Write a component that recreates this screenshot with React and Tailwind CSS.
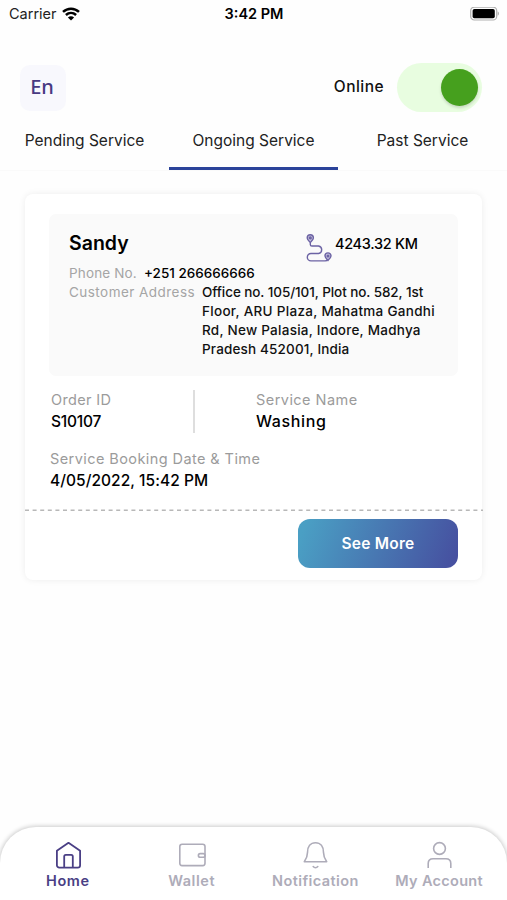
import React, { useState } from 'react';

const TABS = ['Pending Service', 'Ongoing Service', 'Past Service'];

const StatusBar = () => (
    <div className="flex h-7 items-center pl-[9px] pr-[8px] text-black">
        <div className="flex flex-1 items-center gap-[5px]">
            <span className="text-[14.5px] leading-[18px] text-[#222]">Carrier</span>
            <svg width="18" height="14" viewBox="0 0 18 14" fill="none" stroke="#000" strokeWidth="2.5">
                <path d="M1 4.9C5.6 .6 12.4 .6 17 4.9" />
                <path d="M3.9 8C6.9 5.2 11.1 5.2 14.1 8" />
                <path d="M9 13.6 5.9 10.5C7.7 8.9 10.3 8.9 12.1 10.5Z" fill="#000" stroke="none" />
            </svg>
        </div>
        <span className="text-[14.5px] font-semibold leading-[18px]">3:42 PM</span>
        <div className="flex flex-1 justify-end">
            <svg width="29" height="14" viewBox="0 0 29 14" fill="none">
                <rect x="0.7" y="0.2" width="26" height="12.8" rx="3.6" stroke="#b0b0b0" strokeWidth="1.2" />
                <rect x="2.6" y="2" width="22.2" height="9.2" rx="1.8" fill="#000" />
                <path d="M27.7 4.4c1.6.6 1.6 3.8 0 4.4z" fill="#a8a8a8" />
            </svg>
        </div>
    </div>
);

const Header = ({ online, onToggle }) => (
    <div className="mt-[34px] flex h-[50px] items-center pl-5 pr-[25px]">
        <button className="mt-[2px] flex h-[46px] w-[46px] items-center justify-center rounded-[10px] bg-[#f8f8fd] pb-[2px] pr-[2px] font-['Noto_Sans'] text-[20px] font-medium text-[#483a82]">
            En
        </button>
        <span className="ml-auto text-[15.5px] font-medium leading-6 tracking-[0.45px] text-[#111]">Online</span>
        <button
            onClick={onToggle}
            className={`ml-[13px] flex h-[49px] w-[85px] items-center rounded-full px-[4px] ${online ? 'justify-end bg-[#e8fde0]' : 'justify-start bg-gray-200'}`}
        >
            <span className="h-[37px] w-[37px] rounded-full bg-[#46a01e] shadow-[0_2px_3px_rgba(0,0,0,0.15)]" />
        </button>
    </div>
);

const RouteIcon = () => (
    <svg width="26" height="28" viewBox="0 0 26 28" fill="none" stroke="#6c63a4" strokeWidth="1.4" strokeLinecap="round">
        <path d="M4.3 9.2v1.200c0 1 .7 1.600 1.700 1.600h6.500a3.800 3.800 0 0 1 0 7.500H5a3.700 3.700 0 0 0 0 7.400h14.200c1.400 0 2-.4 2.500-1.500" />
        <path d="M4.300 8.600C2.600 6.600 1.200 5.300 1.200 3.900a3.100 3.100 0 0 1 6.200 0c0 1.400-1.400 2.700-3.100 4.700Z" fill="#c5c0dc" />
        <path d="M22 26.400c-1.700-1.800-3-3.100-3-4.500a3 3 0 0 1 6 0c0 1.400-1.300 2.700-3 4.500Z" fill="#c5c0dc" />
        <circle cx="4.300" cy="3.900" r="0.900" />
        <circle cx="22" cy="21.900" r="0.800" />
    </svg>
);

const Field = ({ label, value, labelClass, valueClass }) => (
    <div>
        <p className={`text-[14.5px] leading-[20px] text-[#9b9b9b] ${labelClass}`}>{label}</p>
        <p className={`font-medium leading-[23px] text-black ${valueClass}`}>{value}</p>
    </div>
);

const ServiceCard = () => (
    <div className="mx-[25px] mt-[23px] h-[386px] rounded-[8px] bg-white shadow-[0_0_7px_rgba(0,0,0,0.07)]">
        <div className="px-6 pt-5">
            <div className="h-[162px] rounded-[7px] bg-[#fafafa] pl-5 pt-[15px]">
                <div className="flex h-[35px]">
                    <h2 className="w-[237px] text-[19.5px] font-semibold leading-[28px] text-black">Sandy</h2>
                    <div className="mt-[5px]">
                        <RouteIcon />
                    </div>
                    <span className="ml-[3px] mt-[4px] text-[14.5px] font-medium leading-[21px] tracking-[-0.3px] text-black">4243.32 KM</span>
                </div>
                <div className="flex text-[13.5px] leading-[19px]">
                    <span className="w-[75px] whitespace-nowrap tracking-[0.15px] text-[#a5a5a5]">Phone No.</span>
                    <span className="whitespace-nowrap font-medium text-black">+251 266666666</span>
                </div>
                <div className="flex text-[13.5px] leading-[19px]">
                    <span className="w-[133px] whitespace-nowrap tracking-[0.46px] text-[#a5a5a5]">Customer Address</span>
                    <p className="whitespace-nowrap font-medium text-[#111]">
                        <span className="tracking-[-0.08px]">Office no. 105/101, Plot no. 582, 1st</span><br />
                        <span className="tracking-[0.3px]">Floor, ARU Plaza, Mahatma Gandhi</span><br />
                        <span className="tracking-[0.26px]">Rd, New Palasia, Indore, Madhya</span><br />
                        <span className="tracking-[0.16px]">Pradesh 452001, India</span>
                    </p>
                </div>
            </div>
        </div>
        <div className="mt-[14px] flex h-[43px] pl-[26px]">
            <div className="w-[142px]">
                <Field label="Order ID" value="S10107" labelClass="tracking-[0.35px]" valueClass="text-[15.5px] tracking-[-0.2px]" />
            </div>
            <div className="mr-[61px] w-[2px] bg-[#dedede]" />
            <Field label="Service Name" value="Washing" labelClass="tracking-[0.45px]" valueClass="text-[16px] tracking-[0.65px]" />
        </div>
        <div className="mt-[16px] pl-[25px]">
            <Field label="Service Booking Date & Time" value="4/05/2022, 15:42 PM" labelClass="tracking-[0.42px]" valueClass="text-[15.5px] tracking-[0.05px]" />
        </div>
        <svg className="mt-[17px] block" width="458" height="2" viewBox="0 0 458 2">
            <line x1="0" y1="1.2" x2="458" y2="1.2" stroke="#b8b8b8" strokeWidth="1.5" strokeDasharray="4 3.6" />
        </svg>
        <div className="flex justify-end pr-6 pt-[8px]">
            <button className="h-[49px] w-[160px] rounded-[12px] bg-[linear-gradient(110deg,#4a9fc4_5%,#4650a0_97%)] text-[15.5px] font-semibold tracking-[0.25px] text-white">
                See More
            </button>
        </div>
    </div>
);

const HomeIcon = () => (
    <svg width="28" height="28" viewBox="0 0 28 28" fill="none" stroke="currentColor" strokeWidth="1.8" strokeLinejoin="round">
        <path d="M2.900 9.800 14.500 1.800 26.100 9.800v14.400a2.400 2.400 0 0 1-2.400 2.400H5.300a2.400 2.400 0 0 1-2.400-2.400Z" />
        <path d="M10.200 26.500V15.400c0-1 .6-1.600 1.600-1.600h5.400c1 0 1.600.6 1.600 1.600v11.100" />
    </svg>
);

const WalletIcon = () => (
    <svg width="28" height="28" viewBox="0 0 28 28" fill="none" stroke="currentColor" strokeWidth="1.6">
        <rect x="1.800" y="3.200" width="25.200" height="21.400" rx="2.300" />
        <rect x="20.400" y="12.600" width="6.600" height="3.600" rx="1.800" />
    </svg>
);

const BellIcon = () => (
    <svg width="28" height="28" viewBox="0 0 28 28" fill="none" stroke="currentColor" strokeWidth="1.6" strokeLinejoin="round" strokeLinecap="round">
        <path d="M3.300 20.700c2-2.800 3.200-5.500 3.200-9.200C6.500 5.500 9.500 1.700 14.500 1.700s8 3.800 8 9.800c0 3.700 1.200 6.400 3.200 9.200Z" />
        <path d="M12.200 25.600c1.300 1.500 3.300 1.500 4.600 0" />
    </svg>
);

const AccountIcon = () => (
    <svg width="28" height="28" viewBox="0 0 28 28" fill="none" stroke="currentColor" strokeWidth="1.6">
        <circle cx="14.500" cy="7.500" r="5.900" />
        <path d="M3.200 27v-4.500c0-3 1.900-4.700 4.900-4.700h12.800c3 0 4.900 1.700 4.900 4.700V27" />
    </svg>
);

const NAV_ITEMS = [
    { label: 'Home', icon: HomeIcon, tracking: 'tracking-[0.6px]' },
    { label: 'Wallet', icon: WalletIcon, tracking: 'tracking-[0.55px]' },
    { label: 'Notification', icon: BellIcon, tracking: 'tracking-[0.4px]' },
    { label: 'My Account', icon: AccountIcon, tracking: 'tracking-[0.3px]' },
];

const BottomNav = () => (
    <nav className="mt-auto flex h-[73px] rounded-t-[36px] bg-white px-[6px] pt-[14px] shadow-[0_0_4px_1px_rgba(0,0,0,0.2)]">
        {NAV_ITEMS.map(({ label, icon: Icon, tracking }, i) => (
            <button key={label} className={`flex flex-1 flex-col items-center ${i === 0 ? 'text-[#4a3f85]' : 'text-[#aeacb9]'}`}>
                <Icon />
                <span className={`mt-[2px] whitespace-nowrap text-[14.5px] font-semibold leading-[20px] ${tracking}`}>{label}</span>
            </button>
        ))}
    </nav>
);

const App = () => {
    const [active, setActive] = useState(1);
    const [online, setOnline] = useState(true);

    return (
        <div className="flex h-[900px] w-[507px] flex-col overflow-hidden bg-[#fefefe] font-['Inter',sans-serif]">
            <StatusBar />
            <Header online={online} onToggle={() => setOnline(!online)} />
            <div className="flex h-[59px] border-b border-[#fafafa]">
                {TABS.map((tab, i) => (
                    <button
                        key={tab}
                        onClick={() => setActive(i)}
                        className={`flex-1 whitespace-nowrap border-b-[3px] pt-[3px] text-[15.5px] text-[#222] ${active === i ? 'border-[#2b439a]' : 'border-transparent'}`}
                    >
                        {tab}
                    </button>
                ))}
            </div>
            <ServiceCard />
            <BottomNav />
        </div>
    );
};

export default App;
